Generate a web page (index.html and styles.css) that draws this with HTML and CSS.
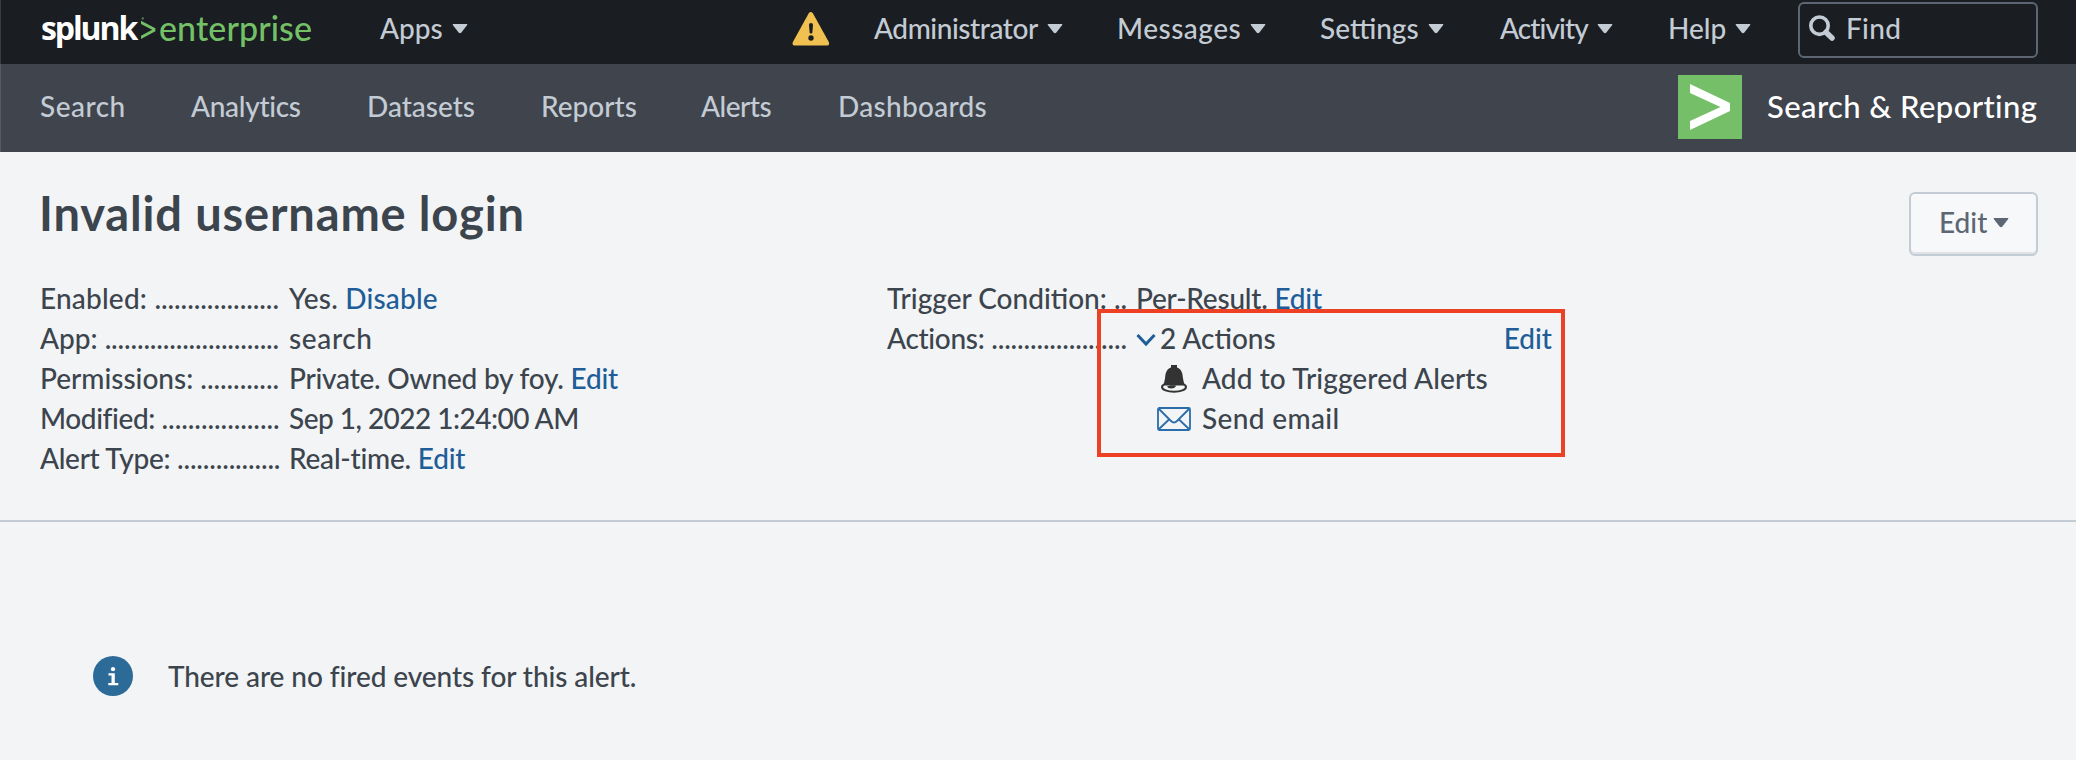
FILE: index.html
```html
<!DOCTYPE html>
<html lang="en">
<head>
<meta charset="utf-8">
<title>Invalid username login</title>
<link rel="stylesheet" href="styles.css">
</head>
<body>
<header class="topbar">
  <div class="brand"><span class="brand-name">splunk</span><svg class="brand-mark" width="15" height="24" viewBox="0 0 15 24"><path d="M0 3.8 14.4 11.2v3L0 22v-3.3l11.2-6L0 7z"/><circle cx="1.8" cy="1.4" r="1.2" opacity=".6"/></svg><span class="brand-product">enterprise</span></div>
  <div class="menu menu-apps"><span>Apps</span><svg class="caret" width="16" height="10" viewBox="0 0 16 10"><path d="M1.2 0h13.6q1 0 .4.9L9.4 8.5Q8 10 6.6 8.5L.8.9Q.2 0 1.2 0z"/></svg></div>
  <svg class="warning" width="38" height="34" viewBox="0 0 38 34"><path class="warning-body" d="M16.6 1.5q2.2-2.8 4.4 0L36.8 30q1.2 3.5-1.9 3.6H2.9Q-.4 33.500.9 30z"/><path class="warning-mark" d="M17 13q-.1-2 2-2t2 2l-.6 7.200q-.2 1.300-1.400 1.300t-1.400-1.300z"/><circle class="warning-mark" cx="19" cy="26" r="2.700"/></svg>
  <nav class="menus">
    <div class="menu menu-admin"><span>Administrator</span><svg class="caret" width="16" height="10" viewBox="0 0 16 10"><path d="M1.2 0h13.6q1 0 .4.9L9.4 8.5Q8 10 6.6 8.5L.8.9Q.2 0 1.2 0z"/></svg></div>
    <div class="menu menu-messages"><span>Messages</span><svg class="caret" width="16" height="10" viewBox="0 0 16 10"><path d="M1.2 0h13.6q1 0 .4.9L9.4 8.5Q8 10 6.6 8.5L.8.9Q.2 0 1.2 0z"/></svg></div>
    <div class="menu menu-settings"><span>Settings</span><svg class="caret" width="16" height="10" viewBox="0 0 16 10"><path d="M1.2 0h13.6q1 0 .4.9L9.4 8.5Q8 10 6.6 8.5L.8.9Q.2 0 1.2 0z"/></svg></div>
    <div class="menu menu-activity"><span>Activity</span><svg class="caret" width="16" height="10" viewBox="0 0 16 10"><path d="M1.2 0h13.6q1 0 .4.9L9.4 8.5Q8 10 6.6 8.5L.8.9Q.2 0 1.2 0z"/></svg></div>
    <div class="menu menu-help"><span>Help</span><svg class="caret" width="16" height="10" viewBox="0 0 16 10"><path d="M1.2 0h13.6q1 0 .4.9L9.4 8.5Q8 10 6.6 8.5L.8.9Q.2 0 1.2 0z"/></svg></div>
  </nav>
  <div class="find"><svg width="26" height="26" viewBox="0 0 26 26"><circle cx="10.500" cy="10.700" r="8.700"/><path d="M17 17.200l6 5.800"/></svg><span>Find</span></div>
</header>
<div class="appbar">
  <nav class="tabs">
    <a class="tab tab-search">Search</a><a class="tab tab-analytics">Analytics</a><a class="tab tab-datasets">Datasets</a><a class="tab tab-reports">Reports</a><a class="tab tab-alerts">Alerts</a><a class="tab tab-dashboards">Dashboards</a>
  </nav>
  <svg class="app-logo" width="64" height="64" viewBox="0 0 64 64"><path d="M12 9 52 28v8L12 55v-9L42.500 32 12 18z"/></svg>
  <span class="app-name">Search &amp; Reporting</span>
</div>
<main>
  <div class="heading">
    <h1>Invalid username login</h1>
    <button class="edit-button"><span>Edit</span><svg class="caret" width="16" height="10" viewBox="0 0 16 10"><path d="M1.2 0h13.6q1 0 .4.9L9.4 8.5Q8 10 6.6 8.5L.8.9Q.2 0 1.2 0z"/></svg></button>
  </div>
  <section class="details">
    <dl class="list">
      <dt class="t-enabled">Enabled: <span class="dots">...................</span></dt><dd class="v-enabled">Yes. <a>Disable</a></dd>
      <dt>App: <span class="dots">...........................</span></dt><dd class="v-app">search</dd>
      <dt class="t-permissions">Permissions: <span class="dots">............</span></dt><dd class="v-permissions">Private. Owned by foy. <a>Edit</a></dd>
      <dt class="t-modified">Modified: <span class="dots">..................</span></dt><dd class="v-modified">Sep 1, 2022 1:24:00 AM</dd>
      <dt class="t-type">Alert Type: <span class="dots">................</span></dt><dd class="v-type">Real-time. <a>Edit</a></dd>
    </dl>
    <dl class="list">
      <dt>Trigger Condition: <span class="dots">..</span></dt><dd class="v-type">Per-Result. <a>Edit</a></dd>
      <dt class="t-actions">Actions: <span class="dots">.....................</span></dt>
      <dd class="actions">
        <div class="actions-head"><svg width="20" height="14" viewBox="0 0 20 14"><path d="M1.500 2 10 11 18.500 2"/></svg><span>2 Actions</span><a>Edit</a></div>
        <div class="action"><svg class="bell" width="28" height="30" viewBox="0 0 28 30"><path class="bell-body" d="M11 1h6v2.500c5 2 5.500 6 6 11l1.500 7H3.500L5 14.500c.5-5 1-9 6-11z"/><ellipse cx="14" cy="23" rx="12" ry="4.800"/><path class="bell-body" d="M7 22.500q4-2 9-1-.5 3-5 3-3 0-4-2z"/></svg><span>Add to Triggered Alerts</span></div>
        <div class="action action-mail"><svg class="mail" width="34" height="24" viewBox="0 0 34 24"><rect x="1" y="1" width="32" height="22" rx="1.500"/><path d="M1.500 1.500 14 14q3 3 6 0L32.500 1.500M1.500 22.500 12 12.500M32.500 22.500 22 12.500"/></svg><span>Send email</span></div>
      </dd>
    </dl>
    <div class="highlight"></div>
  </section>
  <section class="notice">
    <svg width="40" height="40" viewBox="0 0 40 40"><circle cx="20" cy="20" r="20"/><path d="M15.500 17.200h6.300v9.800h3.500v2.200h-10V27h3.200v-7.500h-3z"/><circle class="info-dot" cx="20" cy="13.200" r="2.100"/></svg>
    <span>There are no fired events for this alert.</span>
  </section>
</main>
</body>
</html>
```
FILE: styles.css
```css
* { box-sizing: border-box; }
body {
  margin: 0;
  height: 760px;
  overflow: hidden;
  background: #f2f4f5;
  color: #3c444d;
  font: 500 28px/40px Lato, sans-serif;
}
svg { flex: none; display: block; }
a { color: #1e5d98; }

.topbar {
  display: flex;
  height: 64px;
  background: #1a1d21;
  color: #c3cbd4;
  line-height: 56px;
  box-shadow: inset 1px 0 #3a3d42;
}
.brand { display: flex; width: 339px; margin-left: 41px; white-space: nowrap; }
.brand-name { width: 100px; color: #fff; font: 700 32px/56px "Open Sans", sans-serif; letter-spacing: -2.1px; }
.brand-mark { margin-top: 17px; fill: #74c067; }
.brand-product { margin-left: 3px; color: #74c067; font-size: 34px; line-height: 55px; letter-spacing: 0.1px; }
.menu { display: flex; flex: none; white-space: nowrap; }
.caret { margin: 24px 0 0 9px; fill: currentColor; }
.menu-apps { width: 412px; }
.warning { margin: 12px 44px 0 0; }
.warning-body { fill: #f0c050; }
.warning-mark { fill: #1a1d21; }
.menus { display: flex; flex: none; }
.menu-admin { width: 243px; letter-spacing: -0.43px; }
.menu-messages { width: 203px; letter-spacing: 0.5px; }
.menu-settings { width: 180px; }
.menu-activity { width: 168px; letter-spacing: -0.9px; }
.menu-help { width: 130px; letter-spacing: 0; }
.find {
  display: flex;
  width: 240px;
  height: 56px;
  margin-top: 2px;
  padding-left: 9px;
  border: 2px solid #5c6773;
  border-radius: 6px;
  line-height: 49px;
  letter-spacing: 0.3px;
}
.find svg { margin: 11px 11px 0 0; fill: none; stroke: #c3cbd4; stroke-width: 3.6; }
.find path { stroke-width: 5.500; stroke-linecap: round; }

.appbar {
  display: flex;
  height: 88px;
  background: #3f444d;
  color: #c3cbd4;
  line-height: 84px;
  box-shadow: inset 1px 0 #565b63;
}
.tabs { display: flex; width: 1638px; margin-left: 40px; }
.tab { color: inherit; }
.tab-search { width: 151px; letter-spacing: 0.5px; }
.tab-analytics { width: 176px; letter-spacing: -0.3px; }
.tab-datasets { width: 174px; }
.tab-reports { width: 160px; }
.tab-alerts { width: 137px; letter-spacing: -0.5px; }
.tab-dashboards { letter-spacing: 0.3px; }
.app-logo { margin: 11px 25px 0 0; background: #76bf69; fill: #fff; }
.app-name { color: #fff; font-size: 31px; letter-spacing: 0.4px; white-space: nowrap; }

.heading { display: flex; justify-content: space-between; padding: 30px 38px 0 39px; height: 126px; }
h1 { margin: 0; font-size: 47px; line-height: 62px; letter-spacing: 0.85px; }
.edit-button {
  display: flex;
  width: 129px;
  height: 64px;
  margin-top: 10px;
  padding: 0 0 0 28px;
  border: 2px solid #c3cbd4;
  border-radius: 6px;
  background: #f7f8fa;
  box-shadow: inset 0 -2px #dfe3e6;
  color: #5c6773;
  font: inherit;
  line-height: 57px;
}
.edit-button .caret { margin-left: 6px; }

.details {
  position: relative;
  display: grid;
  grid-template-columns: 847px 665px;
  height: 244px;
  padding-left: 40px;
  border-bottom: 2px solid #c3cbd4;
}
.list { display: grid; grid-template-columns: 240px 1fr; align-content: start; column-gap: 9px; margin: 0; white-space: nowrap; }
dt { overflow: hidden; height: 40px; }
dd { margin: 0; }
.dots { letter-spacing: -0.15px; }
.t-enabled { letter-spacing: 0.2px; }
.t-permissions { letter-spacing: 0; }
.t-modified { letter-spacing: -0.4px; }
.t-type, .t-actions { letter-spacing: -0.3px; }
.t-enabled .dots, .t-permissions .dots, .t-modified .dots { letter-spacing: -0.05px; }
.v-enabled { letter-spacing: 0.2px; }
.v-app { letter-spacing: 0.64px; }
.v-permissions, .v-type { letter-spacing: -0.22px; }
.v-modified { letter-spacing: -0.52px; }
.actions-head { display: flex; }
.actions-head svg { margin: 15px 4px 0 0; fill: none; stroke: #1e5d98; stroke-width: 3; }
.actions-head a { margin-left: auto; }
.action { display: flex; }
.action span { margin-left: 14px; letter-spacing: 0.1px; }
.action-mail span { margin-left: 11px; letter-spacing: 0.35px; }
.bell { margin: 6px 0 0 24px; fill: none; stroke: #333; stroke-width: 2; }
.bell-body { fill: #333; stroke: none; }
.mail { margin: 9px 0 0 21px; fill: none; stroke: #2b6cab; stroke-width: 1.800; }
.highlight { position: absolute; left: 1097px; top: 31px; width: 468px; height: 148px; border: 4px solid #ec4125; }

.notice { display: flex; padding: 134px 0 0 93px; letter-spacing: -0.08px; }
.notice svg { margin-right: 35px; fill: #2c6a98; }
.notice path, .info-dot { fill: #fff; }
```
